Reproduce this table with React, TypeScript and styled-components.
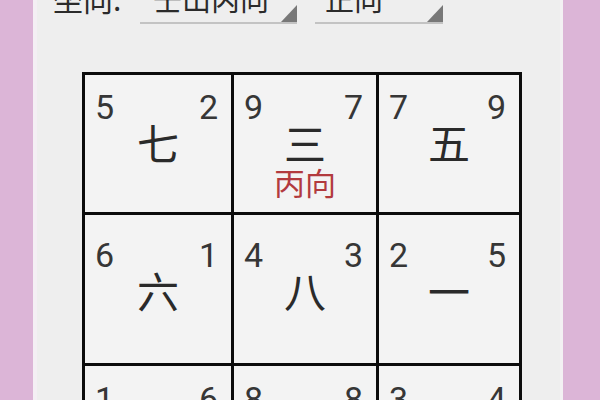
import React from "react";
import styled, { createGlobalStyle } from "styled-components";

const GlobalStyle = createGlobalStyle`
  html, body { margin: 0; padding: 0; }
  body {
    width: 600px;
    height: 400px;
    overflow: hidden;
    background: #dcb5d7;
    font-family: "Noto Sans CJK SC", "Noto Sans", sans-serif;
  }
`;

const Page = styled.div`
  display: flex;
  width: 600px;
  height: 400px;
  overflow: hidden;
`;

const Margin = styled.div<{ $w: number }>`
  flex: 0 0 ${(p) => p.$w}px;
  background: #dcb5d7;
`;

const Panel = styled.div`
  flex: 1;
  box-sizing: border-box;
  background: #eeeeee;
  border-left: 4px solid #f4eff4;
  border-right: 3px solid #f3f1f3;
  display: flex;
  flex-direction: column;
  overflow: hidden;
`;

const Header = styled.div`
  display: flex;
  align-items: flex-start;
  height: 40px;
  margin-top: -17px;
  padding-left: 16px;
`;

const Label = styled.div`
  flex: 0 0 87px;
  font-size: 30px;
  line-height: 30px;
  color: #2b2b2b;
  white-space: nowrap;
`;

const Spinner = styled.div<{ $w: number }>`
  flex: 0 0 ${(p) => p.$w}px;
  box-sizing: border-box;
  height: 41px;
  margin-right: 18px;
  padding-left: ${(p) => (p.$w > 140 ? 13 : 10)}px;
  border-bottom: 2px solid #c3c3c3;
  display: flex;
  justify-content: space-between;
  align-items: flex-end;
`;

const SpinnerText = styled.span`
  align-self: flex-start;
  font-size: 29px;
  line-height: 30px;
  color: #2b2b2b;
  white-space: nowrap;
`;

const Arrow = styled.span`
  width: 16px;
  height: 17px;
  background: #787878;
  clip-path: polygon(100% 0, 100% 100%, 0 100%);
`;

const Board = styled.div`
  align-self: flex-start;
  margin: 49px 0 0 45px;
  display: grid;
  grid-template-columns: 146px 142px 140px;
  grid-template-rows: 137px 148px 160px;
  gap: 3px;
  padding: 3px;
  background: #0c0c0c;
`;

const Cell = styled.div<{ $pad: number }>`
  background: #f3f3f3;
  display: flex;
  flex-direction: column;
  padding-top: ${(p) => p.$pad}px;
  overflow: hidden;
`;

const Digits = styled.div`
  display: flex;
  justify-content: space-between;
  padding: 0 13px 0 10px;
  font-family: Roboto, "Noto Sans", sans-serif;
  font-size: 34px;
  line-height: 32px;
  color: #363636;
`;

const Star = styled.div`
  margin-top: -2px;
  text-align: center;
  font-size: 42px;
  line-height: 42px;
  color: #2a2a2a;
`;

const Facing = styled.div`
  margin-top: 4px;
  text-align: center;
  font-size: 31px;
  line-height: 30px;
  color: #b23a3e;
`;

type CellData = { l: string; r: string; star: string; note?: string };

const rows: { pad: number; cells: CellData[] }[] = [
  {
    pad: 16,
    cells: [
      { l: "5", r: "2", star: "七" },
      { l: "9", r: "7", star: "三", note: "丙向" },
      { l: "7", r: "9", star: "五" },
    ],
  },
  {
    pad: 24,
    cells: [
      { l: "6", r: "1", star: "六" },
      { l: "4", r: "3", star: "八" },
      { l: "2", r: "5", star: "一" },
    ],
  },
  {
    pad: 17,
    cells: [
      { l: "1", r: "6", star: "四" },
      { l: "8", r: "8", star: "二" },
      { l: "3", r: "4", star: "九" },
    ],
  },
];

export default function App() {
  return (
    <>
      <GlobalStyle />
      <Page>
        <Margin $w={33} />
        <Panel>
          <Header>
            <Label>坐向:</Label>
            <Spinner $w={157}>
              <SpinnerText>壬山丙向</SpinnerText>
              <Arrow />
            </Spinner>
            <Spinner $w={128}>
              <SpinnerText>正向</SpinnerText>
              <Arrow />
            </Spinner>
          </Header>
          <Board>
            {rows.map((row, ri) =>
              row.cells.map((c, ci) => (
                <Cell key={`${ri}-${ci}`} $pad={row.pad}>
                  <Digits>
                    <span>{c.l}</span>
                    <span>{c.r}</span>
                  </Digits>
                  <Star>{c.star}</Star>
                  {c.note && <Facing>{c.note}</Facing>}
                </Cell>
              ))
            )}
          </Board>
        </Panel>
        <Margin $w={37} />
      </Page>
    </>
  );
}
